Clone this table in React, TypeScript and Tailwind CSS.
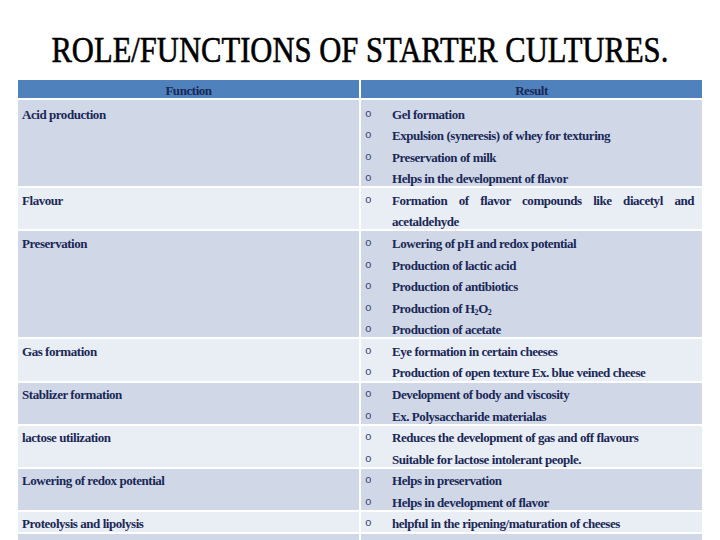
import React from "react";

type Row = { f: string; r: React.ReactNode[]; n: number };

const rows: Row[] = [
  {
    f: "Acid production",
    r: [
      "Gel formation",
      "Expulsion (syneresis) of whey for texturing",
      "Preservation of milk",
      "Helps in the development of flavor",
    ],
    n: 4,
  },
  { f: "Flavour", r: ["Formation of flavor compounds like diacetyl and acetaldehyde"], n: 2 },
  {
    f: "Preservation",
    r: [
      "Lowering of pH and redox potential",
      "Production of lactic acid",
      "Production of antibiotics",
      <span key="h2o2">
        Production of H<sub className="text-[8px] leading-none">2</sub>O
        <sub className="text-[8px] leading-none">2</sub>
      </span>,
      "Production of acetate",
    ],
    n: 5,
  },
  {
    f: "Gas formation",
    r: ["Eye formation in certain cheeses", "Production of open texture Ex. blue veined cheese"],
    n: 2,
  },
  { f: "Stablizer formation", r: ["Development of body and viscosity", "Ex. Polysaccharide materialas"], n: 2 },
  {
    f: "lactose utilization",
    r: ["Reduces the development of gas and off flavours", "Suitable for lactose intolerant people."],
    n: 2,
  },
  { f: "Lowering of redox potential", r: ["Helps in preservation", "Helps in development  of flavor"], n: 2 },
  { f: "Proteolysis and lipolysis", r: ["helpful in the ripening/maturation of cheeses"], n: 1 },
  { f: "", r: [""], n: 1 },
];

const LINE = 21.58;

export default function App() {
  return (
    <div
      className="w-[720px] h-[540px] overflow-hidden bg-white"
      style={{ fontFamily: '"Liberation Serif", "Times New Roman", serif' }}
    >
      <div className="h-[80px] flex items-end justify-center pb-[12px]">
        <h1 className="text-[36px] leading-none font-normal text-black whitespace-nowrap inline-block scale-x-[0.85] [-webkit-text-stroke:0.6px_black]">
          ROLE/FUNCTIONS OF STARTER CULTURES.
        </h1>
      </div>
      <div className="ml-[18px] w-[684px] flex flex-col text-[#1a2856] text-[13px] font-bold tracking-[-0.45px]">
        <div className="flex gap-[2px] mb-[2px]">
          <div className="w-[341px] h-[18px] bg-[#4f81bd] flex items-center justify-center pt-[3px]">
            Function
          </div>
          <div className="w-[341px] h-[18px] bg-[#4f81bd] flex items-center justify-center pt-[3px]">
            Result
          </div>
        </div>
        {rows.map((row, i) => {
          const bg = i % 2 === 0 ? "bg-[#d0d8e8]" : "bg-[#e9edf4]";
          const first = i === 0;
          const h = row.n * LINE + (first ? 2 : 0);
          return (
            <div key={i} className="flex gap-[2px] shrink-0" style={{ height: h }}>
              <div
                className={`w-[341px] ${bg} shadow-[inset_0_-2px_0_#ffffff] pl-[4px] leading-[21.58px] overflow-hidden ${
                  first ? "pt-[3.5px]" : "pt-[1.5px]"
                }`}
              >
                {row.f}
              </div>
              <div
                className={`w-[341px] ${bg} shadow-[inset_0_-2px_0_#ffffff] pl-[4px] pr-[8px] overflow-hidden ${
                  first ? "pt-[3.5px]" : "pt-[1.5px]"
                }`}
              >
                {row.r.map((t, j) => (
                  <div key={j} className="flex leading-[21.58px] min-h-[21.58px]">
                    <span
                      className="w-[27px] shrink-0 text-[11px] font-normal tracking-normal text-[#3a4670]"
                      style={{ fontFamily: '"Liberation Mono", "Courier New", monospace' }}
                    >
                      {t === "" ? "" : "o"}
                    </span>
                    <span className="flex-1 text-justify">{t}</span>
                  </div>
                ))}
              </div>
            </div>
          );
        })}
      </div>
    </div>
  );
}
